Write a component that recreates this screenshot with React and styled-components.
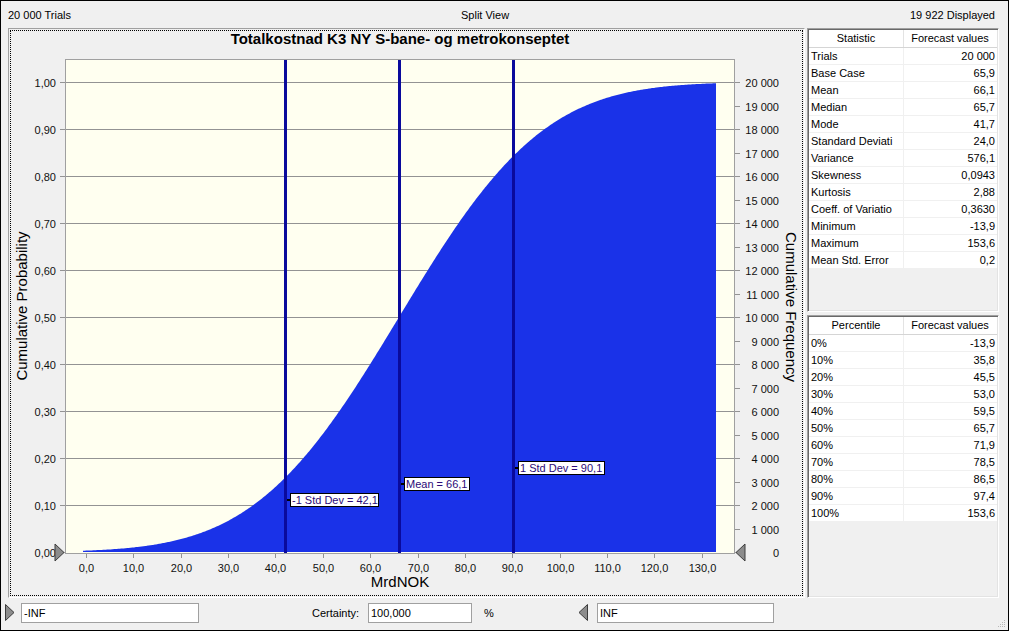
import React from 'react';
import styled, { createGlobalStyle } from 'styled-components';

// Global page reset

const GlobalStyle = createGlobalStyle`
  html, body {
    margin: 0;
    padding: 0;
    background: #f0f0f0;
  }
  body {
    font-family: "Liberation Sans", Arial, sans-serif;
    font-size: 11px;
    color: #000;
  }
`;

// Window frame

const Window = styled.div`
  position: relative;
  width: 1009px;
  height: 631px;
  box-sizing: border-box;
  border: 1px solid #000;
  background: #f0f0f0;
  display: flex;
  flex-direction: column;
  overflow: hidden;
`;

// Top status bar

const TopBar = styled.div`
  height: 27px;
  box-sizing: border-box;
  padding: 1px 13px 0 7px;
  display: grid;
  grid-template-columns: 453px auto 1fr;
  align-items: center;
`;

const TopText = styled.span`
  text-align: ${(p) => p.align || 'left'};
  white-space: nowrap;
`;

// Main area

const Main = styled.div`
  height: 570px;
  display: flex;
  padding-left: 7px;
`;

const ChartPanel = styled.div`
  width: 797px;
  height: 570px;
  box-sizing: border-box;
  border: 1px solid;
  border-color: #a0a0a0 #fff #fff #a0a0a0;
  padding: 1px;
`;

const ChartInner = styled.div`
  height: 100%;
  box-sizing: border-box;
  border: 1px dotted #000;
  background: #f0f0f0;
`;

const ChartSvg = styled.svg`
  display: block;
  font-family: "Liberation Sans", Arial, sans-serif;
`;

const SvgText = styled.text`
  font-size: ${(p) => p.size || 11}px;
  font-weight: ${(p) => (p.bold ? 700 : 400)};
  fill: ${(p) => p.color || '#111'};
`;

// Side tables

const SidePanel = styled.div`
  width: 192px;
  margin-left: 2px;
  display: flex;
  flex-direction: column;
  gap: 3px;
`;

const Table = styled.div`
  flex: 1;
  box-sizing: border-box;
  border: 1px solid;
  border-color: #a0a0a0 #fff #fff #a0a0a0;
  box-shadow: inset 1px 1px 0 #696969, inset -1px -1px 0 #e3e3e3;
  padding: 1px;
  background: #f0f0f0;
  overflow: hidden;
`;

const HeaderRow = styled.div`
  height: 18px;
  box-sizing: border-box;
  display: grid;
  grid-template-columns: 94px 94px;
  background: #fff;
  border-bottom: 1px solid #d5d5d5;
`;

const HeaderCell = styled.div`
  text-align: center;
  line-height: 17px;
  white-space: nowrap;
  overflow: hidden;
  ${(p) => p.divided && 'box-shadow: inset 1px 0 0 #e3e3e3;'}
`;

const Row = styled.div`
  height: 17px;
  box-sizing: border-box;
  display: grid;
  grid-template-columns: 94px 94px;
  background: #fff;
  border-bottom: 1px solid #f0f0f0;
`;

const Cell = styled.div`
  line-height: 17px;
  white-space: nowrap;
  overflow: hidden;
  padding: 0 ${(p) => (p.right ? '2px' : '0')} 0 ${(p) => (p.right ? '0' : '2px')};
  text-align: ${(p) => (p.right ? 'right' : 'left')};
  ${(p) => p.right && 'border-left: 1px solid #f0f0f0;'}
`;

// Bottom bar

const BottomBar = styled.div`
  height: 32px;
  box-sizing: border-box;
  padding-top: 5px;
  display: flex;
  align-items: flex-start;
`;

const Arrow = styled.svg`
  display: block;
  margin-left: ${(p) => p.gap}px;
  margin-top: 1px;
`;

const Field = styled.div`
  width: ${(p) => p.w}px;
  height: 20px;
  margin-left: ${(p) => p.gap}px;
  box-sizing: border-box;
  border: 1px solid #a0a0a0;
  background: #fff;
  padding-left: 2px;
  line-height: 18px;
`;

const Label = styled.div`
  width: ${(p) => p.w}px;
  margin-left: ${(p) => p.gap}px;
  line-height: 20px;
  white-space: nowrap;
`;

const Grip = styled.svg`
  position: absolute;
  right: 2px;
  bottom: 2px;
`;

const statistics = [
  ['Trials', '20 000'],
  ['Base Case', '65,9'],
  ['Mean', '66,1'],
  ['Median', '65,7'],
  ['Mode', '41,7'],
  ['Standard Deviati', '24,0'],
  ['Variance', '576,1'],
  ['Skewness', '0,0943'],
  ['Kurtosis', '2,88'],
  ['Coeff. of Variatio', '0,3630'],
  ['Minimum', '-13,9'],
  ['Maximum', '153,6'],
  ['Mean Std. Error', '0,2'],
];

const percentiles = [
  ['0%', '-13,9'],
  ['10%', '35,8'],
  ['20%', '45,5'],
  ['30%', '53,0'],
  ['40%', '59,5'],
  ['50%', '65,7'],
  ['60%', '71,9'],
  ['70%', '78,5'],
  ['80%', '86,5'],
  ['90%', '97,4'],
  ['100%', '153,6'],
];

// chart scale (page coordinates)
const X0 = 86;
const XS = 4.736;
const YB = 552;
const YH = 470;
const px = (v) => X0 + v * XS;
const py = (p) => YB - YH * p;

const erf = (x) => {
  const s = x < 0 ? -1 : 1;
  const a = Math.abs(x);
  const t = 1 / (1 + 0.3275911 * a);
  const y =
    1 -
    ((((1.061405429 * t - 1.453152027) * t + 1.421413741) * t - 0.284496736) * t + 0.254829592) *
      t *
      Math.exp(-a * a);
  return s * y;
};
const phi = (z) => 0.5 * (1 + erf(z / Math.SQRT2));

const curvePath = () => {
  let d = 'M83,552';
  for (let x = 83; x <= 716; x++) {
    const v = (x - X0) / XS;
    d += ` L${x},${py(phi((v - 66.1) / 24)).toFixed(1)}`;
  }
  return d + ' L716,552 Z';
};

const StatTable = ({ title, rows }) => (
  <Table>
    <HeaderRow>
      <HeaderCell>{title}</HeaderCell>
      <HeaderCell divided>Forecast values</HeaderCell>
    </HeaderRow>
    {rows.map(([k, v]) => (
      <Row key={k}>
        <Cell>{k}</Cell>
        <Cell right>{v}</Cell>
      </Row>
    ))}
  </Table>
);

const Marker = ({ x, y, dir }) => {
  const pts =
    dir === 'right'
      ? `${x},${y - 8} ${x + 9},${y + 0.5} ${x},${y + 9}`
      : `${x + 9},${y - 8} ${x},${y + 0.5} ${x + 9},${y + 9}`;
  return <polygon points={pts} fill="#8c8c8c" stroke="#3c3c3c" strokeWidth="1" />;
};

const StdLabel = ({ lineX, x, y, w, text }) => (
  <g>
    <rect x={lineX + 3} y={y + 6} width={x - lineX - 2} height={2} fill="#000" />
    <rect x={x + 0.5} y={y + 0.5} width={w} height={13} fill="#fff" stroke="#000" />
    <SvgText x={x + 2} y={y + 11} color="#2c0a78">
      {text}
    </SvgText>
  </g>
);

const Chart = () => {
  const grid = [1, 2, 3, 4, 5, 6, 7, 8, 9, 10];
  const xs = [0, 10, 20, 30, 40, 50, 60, 70, 80, 90, 100, 110, 120, 130];
  const freq = Array.from({ length: 21 }, (_, j) => j);
  return (
    <ChartSvg width="791" height="564" viewBox="11 31 791 564">
      <SvgText x="400" y="44" size={15} bold color="#000" textAnchor="middle">
        Totalkostnad K3 NY S-bane- og metrokonseptet
      </SvgText>

      <rect x="65" y="59" width="670" height="494" fill="#fffff0" />

      {grid.map((k) => (
        <line key={k} x1="65" x2="735" y1={py(k / 10) + 0.5} y2={py(k / 10) + 0.5} stroke="#939393" />
      ))}

      <path d={curvePath()} fill="#1a32e8" />

      {[284, 398, 512].map((x) => (
        <rect key={x} x={x} y="60" width="3" height="493" fill="#0a0a9c" />
      ))}

      <StdLabel lineX={284} x={290} y={493} w={88} text="-1 Std Dev = 42,1" />
      <StdLabel lineX={398} x={404} y={477} w={65} text="Mean = 66,1" />
      <StdLabel lineX={512} x={518} y={461} w={86} text="1 Std Dev = 90,1" />

      {/* plot frame */}
      <line x1="65.5" x2="65.5" y1="59" y2="554" stroke="#a0a0a0" />
      <line x1="65" x2="735" y1="59.5" y2="59.5" stroke="#a0a0a0" />
      <line x1="734.5" x2="734.5" y1="59" y2="554" stroke="#a0a0a0" />
      <line x1="65" x2="735" y1="553.5" y2="553.5" stroke="#a0a0a0" />

      {/* left axis */}
      {[0, ...grid].map((k) => (
        <g key={k}>
          <line x1="60" x2="65" y1={py(k / 10) + 0.5} y2={py(k / 10) + 0.5} stroke="#939393" />
          <SvgText x="56" y={py(k / 10) + 4.5} textAnchor="end">
            {(k / 10).toFixed(2).replace('.', ',')}
          </SvgText>
        </g>
      ))}

      {/* right axis */}
      {freq.map((j) => {
        const y = Math.round(552 - 23.5 * j) + 0.5;
        return (
          <g key={j}>
            <line x1="735" x2="740" y1={y} y2={y} stroke="#939393" />
            <SvgText x="779" y={y + 4} textAnchor="end">
              {j === 0 ? '0' : `${j} 000`}
            </SvgText>
          </g>
        );
      })}

      {/* bottom axis */}
      {xs.map((v) => {
        const x = Math.round(px(v)) + 0.5;
        return (
          <g key={v}>
            <line x1={x} x2={x} y1="554" y2="558" stroke="#939393" />
            <SvgText x={x} y="572" textAnchor="middle">
              {v.toFixed(1).replace('.', ',')}
            </SvgText>
          </g>
        );
      })}

      <SvgText x="400" y="587" size={15} color="#000" textAnchor="middle">
        MrdNOK
      </SvgText>
      <SvgText size={15} color="#000" textAnchor="middle" transform="translate(27,306) rotate(-90)">
        Cumulative Probability
      </SvgText>
      <SvgText size={15} color="#000" textAnchor="middle" transform="translate(786,307) rotate(90)">
        Cumulative Frequency
      </SvgText>

      <Marker x={55} y={552} dir="right" />
      <Marker x={736} y={552} dir="left" />
    </ChartSvg>
  );
};

const ArrowIcon = ({ dir, gap }) => (
  <Arrow width="10" height="18" viewBox="0 0 10 18" gap={gap}>
    <polygon
      points={dir === 'right' ? '0.5,0.5 9,8.5 0.5,16.5' : '9.5,0.5 1,8.5 9.5,16.5'}
      fill="#8c8c8c"
      stroke="#3c3c3c"
    />
  </Arrow>
);

const App = () => {
  return (
    <>
      <GlobalStyle />
      <Window>
        <TopBar>
          <TopText>20 000 Trials</TopText>
          <TopText>Split View</TopText>
          <TopText align="right">19 922 Displayed</TopText>
        </TopBar>

        <Main>
          <ChartPanel>
            <ChartInner>
              <Chart />
            </ChartInner>
          </ChartPanel>
          <SidePanel>
            <StatTable title="Statistic" rows={statistics} />
            <StatTable title="Percentile" rows={percentiles} />
          </SidePanel>
        </Main>

        <BottomBar>
          <ArrowIcon dir="right" gap={4} />
          <Field w={178} gap={6}>-INF</Field>
          <Label w={47} gap={113}>Certainty:</Label>
          <Field w={104} gap={9}>100,000</Field>
          <Label w={10} gap={12}>%</Label>
          <ArrowIcon dir="left" gap={84} />
          <Field w={177} gap={9}>INF</Field>
        </BottomBar>

        <Grip width="8" height="8" viewBox="0 0 8 8">
          {[[6, 0], [4, 2], [6, 2], [2, 4], [4, 4], [6, 4], [0, 6], [2, 6], [4, 6], [6, 6]].map(([x, y]) => (
            <rect key={`${x}-${y}`} x={x} y={y} width="1" height="1" fill="#b8b8b8" />
          ))}
        </Grip>
      </Window>
    </>
  );
};

export default App;
